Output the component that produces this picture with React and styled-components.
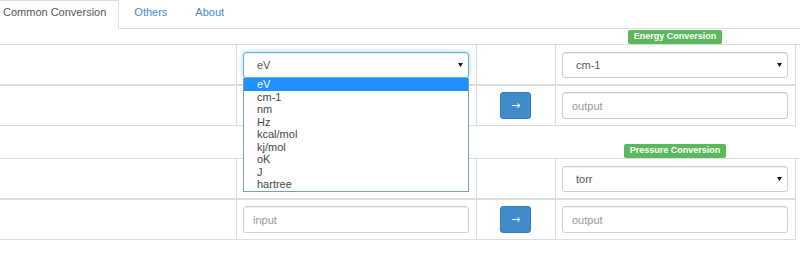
import React from "react";
import styled, { createGlobalStyle, css } from "styled-components";

const GlobalStyle = createGlobalStyle`
  html, body {
    margin: 0;
    padding: 0;
    background: #fff;
  }
  body {
    font-family: "Liberation Sans", Arial, sans-serif;
    font-size: 11px;
    color: #333;
  }
  * {
    box-sizing: border-box;
  }
`;

const Page = styled.div`
  width: 800px;
  height: 259px;
  overflow: hidden;
`;

const TabBar = styled.ul`
  display: flex;
  list-style: none;
  margin: 0 0 0 -10px;
  padding: 0;
  height: 29px;
  border-bottom: 1px solid #ddd;
`;

const Tab = styled.li`
  margin: 0 2px -1px 0;
  padding: 3px 12px 8px;
  line-height: 16px;
  border: 1px solid transparent;
  color: #428bca;
  cursor: pointer;

  ${(props) =>
    props.$active &&
    css`
      color: #555;
      background: #fff;
      border-color: #ddd;
      border-bottom-color: #fff;
    `}
`;

const Section = styled.section`
  margin-top: ${(props) => props.$offset || 0}px;
`;

const columns = "240px 240px 79px 240px";

const Caption = styled.div`
  display: grid;
  grid-template-columns: ${columns};
  margin-left: -4px;
  height: 15px;
  align-items: end;
`;

const Badge = styled.span`
  grid-column: 4;
  justify-self: center;
  background: #5cb85c;
  color: #fff;
  font-weight: bold;
  font-size: 9px;
  line-height: 9px;
  padding: 2px 6px 3px;
  border-radius: 2px;
  white-space: nowrap;
`;

const Table = styled.div`
  display: grid;
  grid-template-columns: ${columns};
  margin-left: -4px;
  border-top: 1px solid #ddd;
  border-left: 1px solid #ddd;
`;

const Cell = styled.div`
  display: flex;
  align-items: center;
  justify-content: ${(props) => (props.$center ? "center" : "flex-start")};
  border-right: 1px solid #ddd;
  border-bottom: ${(props) => (props.$head ? 2 : 1)}px solid #ddd;
  padding: ${(props) => (props.$head ? "7px 7px 6px 6px" : "6px 7px 6px 6px")};
  min-height: ${(props) => (props.$head ? 41 : 40)}px;
`;

const Select = styled.div`
  position: relative;
  display: flex;
  align-items: center;
  justify-content: space-between;
  width: 100%;
  height: 26px;
  padding: 0 5px 0 13px;
  border: 1px solid ${(props) => (props.$focused ? "#66afe9" : "#ccc")};
  border-radius: 3px;
  background: #fff;
  color: #555;
  box-shadow: ${(props) =>
    props.$focused
      ? "inset 0 1px 1px rgba(0,0,0,.075), 0 0 5px rgba(102,175,233,.6)"
      : "inset 0 1px 1px rgba(0,0,0,.075)"};
`;

const Input = styled.input`
  width: 100%;
  height: 27px;
  padding: 0 9px;
  border: 1px solid #ccc;
  border-radius: 3px;
  font: inherit;
  color: #555;
  box-shadow: inset 0 1px 1px rgba(0, 0, 0, 0.075);
  outline: none;

  &::placeholder {
    color: #999;
  }
`;

const ArrowButton = styled.button`
  width: 31px;
  height: 27px;
  padding: 0 0 1px;
  border: 1px solid #357ebd;
  border-radius: 3px;
  background: #428bca;
  color: #fff;
  font-family: "DejaVu Sans", sans-serif;
  font-size: 11px;
  line-height: 1;
  cursor: pointer;
`;

const Dropdown = styled.ul`
  position: absolute;
  top: calc(100% + 1px);
  left: -1px;
  right: -1px;
  z-index: 10;
  margin: 0;
  padding: 0;
  list-style: none;
  background: #fff;
  border: 1px solid #7f9db9;
  border-top: none;
`;

const Option = styled.li`
  height: 12.5px;
  line-height: 12.5px;
  padding-left: 13px;
  color: #444;
  background: ${(props) => (props.$selected ? "#1e90ff" : "#fff")};
  ${(props) => props.$selected && "color: #fff;"}
`;

const Caret = () => (
  <svg width="5" height="4" viewBox="0 0 5 4">
    <polygon points="0,0 5,0 2.5,4" fill="#111" />
  </svg>
);

const energyUnits = ["eV", "cm-1", "nm", "Hz", "kcal/mol", "kj/mol", "oK", "J", "hartree"];

function Converter({ title, from, to, open, offset }) {
  return (
    <Section $offset={offset}>
      <Caption>
        <Badge>{title}</Badge>
      </Caption>
      <Table>
        <Cell $head />
        <Cell $head>
          <Select $focused={open}>
            <span>{from}</span>
            <Caret />
            {open && (
              <Dropdown>
                {energyUnits.map((u) => (
                  <Option key={u} $selected={u === from}>
                    {u}
                  </Option>
                ))}
              </Dropdown>
            )}
          </Select>
        </Cell>
        <Cell $head />
        <Cell $head>
          <Select>
            <span>{to}</span>
            <Caret />
          </Select>
        </Cell>

        <Cell />
        <Cell>
          <Input placeholder={open ? "" : "input"} />
        </Cell>
        <Cell $center>
          <ArrowButton>→</ArrowButton>
        </Cell>
        <Cell>
          <Input placeholder="output" />
        </Cell>
      </Table>
    </Section>
  );
}

export default function App() {
  return (
    <Page>
      <GlobalStyle />
      <TabBar>
        <Tab $active>Common Conversion</Tab>
        <Tab>Others</Tab>
        <Tab>About</Tab>
      </TabBar>
      <Converter title="Energy Conversion" from="eV" to="cm-1" open />
      <Converter title="Pressure Conversion" from="" to="torr" offset={17} />
    </Page>
  );
}
